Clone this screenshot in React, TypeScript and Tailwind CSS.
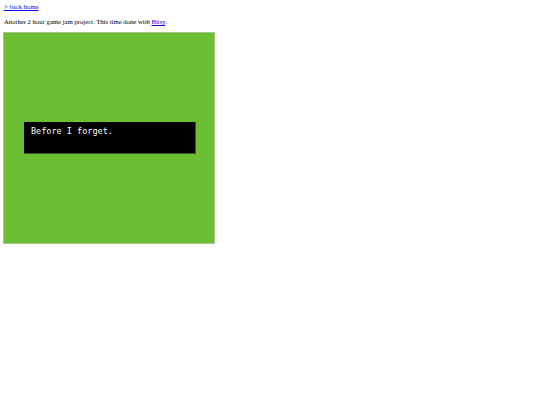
export default function App() {
  return (
    <div className="bg-white min-h-screen w-full pt-[3px] pl-[4px] text-[6.7px] leading-[8px] text-black" style={{ fontFamily: '"Liberation Serif", serif' }}>
      <a href="#" className="text-[#0000ee] underline">&gt; back home</a>
      <p className="mt-[7px]">
        Another 2 hour game jam project. This time done with{' '}
        <a href="#" className="text-[#0000ee] underline">Bitsy</a>.
      </p>
      <div className="mt-[6px] -ml-[1px] w-[212px] h-[212px] border border-[#a3c98a] bg-[#6cbe33] flex items-center justify-center">
        <div className="w-[172px] h-[32px] ml-[2px] bg-black border-r border-b border-[#3a5a22] px-[7px] pt-[4px]">
          <span className="text-white text-[8.5px] leading-[10px]" style={{ fontFamily: '"DejaVu Sans Mono", monospace' }}>Before I forget.</span>
        </div>
      </div>
    </div>
  );
}
